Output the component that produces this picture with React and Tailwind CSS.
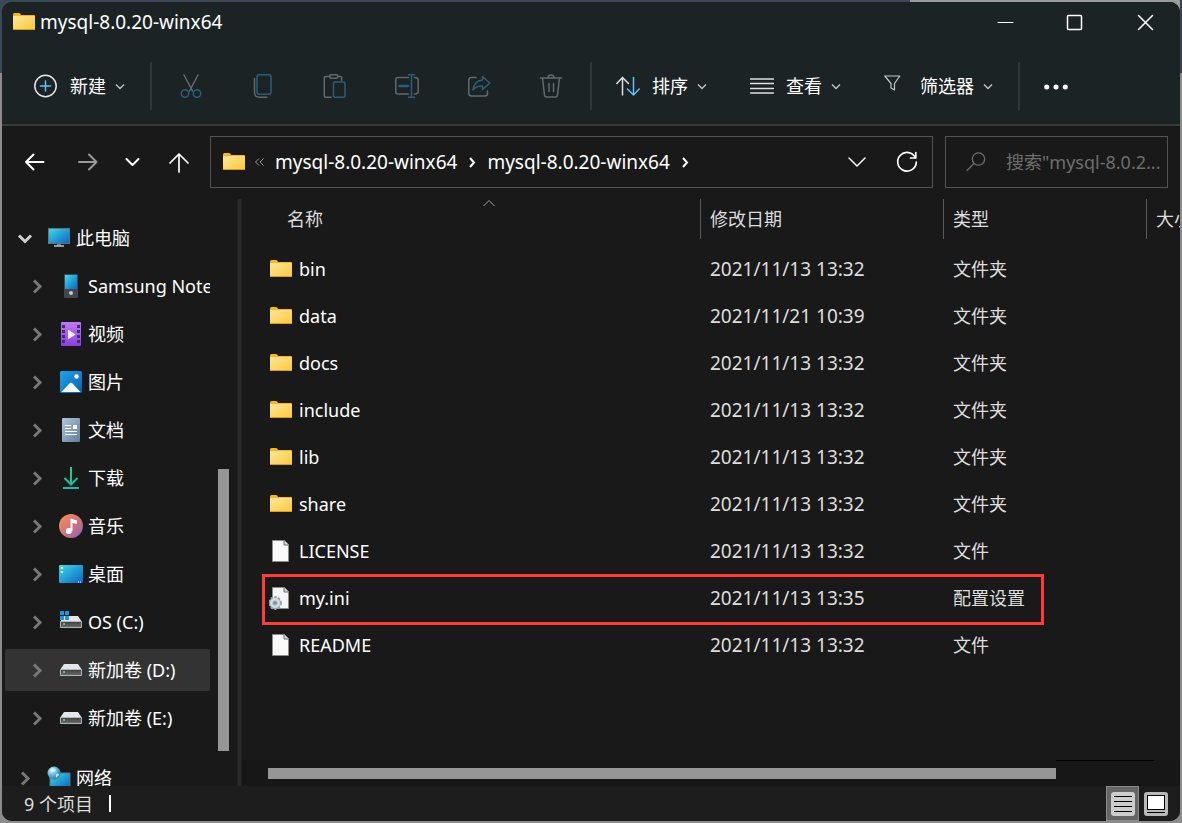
import React from 'react';

const sidebarItems = [
  { name: '此电脑', icon: 'pc', root: true, open: true },
  { name: 'Samsung Note10+', icon: 'phone' },
  { name: '视频', icon: 'video' },
  { name: '图片', icon: 'picture' },
  { name: '文档', icon: 'document' },
  { name: '下载', icon: 'download' },
  { name: '音乐', icon: 'music' },
  { name: '桌面', icon: 'desktop' },
  { name: 'OS (C:)', icon: 'osDrive' },
  { name: '新加卷 (D:)', icon: 'drive', selected: true },
  { name: '新加卷 (E:)', icon: 'drive' },
];

const files = [
  { name: 'bin', date: '2021/11/13 13:32', type: '文件夹', icon: 'folder' },
  { name: 'data', date: '2021/11/21 10:39', type: '文件夹', icon: 'folder' },
  { name: 'docs', date: '2021/11/13 13:32', type: '文件夹', icon: 'folder' },
  { name: 'include', date: '2021/11/13 13:32', type: '文件夹', icon: 'folder' },
  { name: 'lib', date: '2021/11/13 13:32', type: '文件夹', icon: 'folder' },
  { name: 'share', date: '2021/11/13 13:32', type: '文件夹', icon: 'folder' },
  { name: 'LICENSE', date: '2021/11/13 13:32', type: '文件', icon: 'file' },
  { name: 'my.ini', date: '2021/11/13 13:35', type: '配置设置', icon: 'config', marked: true },
  { name: 'README', date: '2021/11/13 13:32', type: '文件', icon: 'file' },
];

function Gradients() {
  return (
    <svg width="0" height="0" className="absolute" aria-hidden="true">
      <defs>
        <linearGradient id="gFolder" x1="0" y1="0" x2="1" y2="1">
          <stop offset="0" stopColor="#ffe69c" />
          <stop offset="1" stopColor="#fcc838" />
        </linearGradient>
        <linearGradient id="gScreen" x1="0" y1="0" x2="1" y2="1">
          <stop offset="0" stopColor="#3bdcea" />
          <stop offset="1" stopColor="#0b63c4" />
        </linearGradient>
        <linearGradient id="gVideo" x1="0" y1="0" x2="0" y2="1">
          <stop offset="0" stopColor="#bf7af5" />
          <stop offset="1" stopColor="#8a3fe0" />
        </linearGradient>
        <linearGradient id="gPicture" x1="0" y1="0" x2="1" y2="1">
          <stop offset="0" stopColor="#22a4ec" />
          <stop offset="1" stopColor="#0a5fb0" />
        </linearGradient>
        <linearGradient id="gDoc" x1="0" y1="0" x2="1" y2="1">
          <stop offset="0" stopColor="#b4c6d8" />
          <stop offset="1" stopColor="#5d7d9e" />
        </linearGradient>
        <linearGradient id="gDownload" gradientUnits="userSpaceOnUse" x1="4" y1="1" x2="20" y2="23">
          <stop offset="0" stopColor="#35d18c" />
          <stop offset="1" stopColor="#12b3a8" />
        </linearGradient>
        <linearGradient id="gMusic" x1="0" y1="0" x2="1" y2="1">
          <stop offset="0.1" stopColor="#f28e5c" />
          <stop offset="0.55" stopColor="#d0707c" />
          <stop offset="1" stopColor="#8560c4" />
        </linearGradient>
        <linearGradient id="gDrive" x1="0" y1="0" x2="0" y2="1">
          <stop offset="0" stopColor="#3f3f3f" />
          <stop offset="1" stopColor="#6a6a6a" />
        </linearGradient>
        <radialGradient id="gGlobe" cx="0.35" cy="0.3" r="0.8">
          <stop offset="0" stopColor="#d8f3fc" />
          <stop offset="0.5" stopColor="#5bb4d8" />
          <stop offset="1" stopColor="#1e6f9e" />
        </radialGradient>
      </defs>
    </svg>
  );
}

function DriveShape() {
  return (
    <>
      <path d="M5 6h14l4 6H1z" fill="#e4e4ea" />
      <path d="M1.500 11.500h21V17.500h-21z" fill="url(#gDrive)" stroke="#b5b5b5" strokeWidth="1" />
      <rect x="4" y="13" width="2" height="2" fill="#3ee03e" />
    </>
  );
}

const shapes = {
  folder: (
    <>
      <path d="M1 4.500Q1 3 2.500 3H7q1.500 0 2 2h13q1 0 1 1v4H1z" fill="#fab616" />
      <rect x="1" y="6" width="22" height="14" rx="1" fill="url(#gFolder)" />
      <path d="M1 19.500h22" stroke="#dd9c1c" />
    </>
  ),
  file: (
    <>
      <path d="M3.500 1.500h12l4 4v17h-16z" fill="#fafafa" stroke="#8d8d85" />
      <path d="M15 1.500v4.500h4.500" fill="#d8d8d8" stroke="#6d6d6d" />
    </>
  ),
  config: (
    <>
      <path d="M3.500 1.500h12l4 4v17h-16z" fill="#f4f5f6" stroke="#8d8d85" />
      <path d="M15 1.500v4.500h4.500" fill="#d8d8d8" stroke="#6d6d6d" />
      <circle cx="6" cy="17" r="5.800" fill="#b4c2cd" stroke="#93a4b1" strokeWidth="2.200" strokeDasharray="2.300 1.400" />
      <circle cx="6" cy="17" r="3.800" fill="none" stroke="#d3dde5" strokeWidth="2.200" />
      <circle cx="6" cy="17" r="1.800" fill="#7d8a94" />
    </>
  ),
  pc: (
    <>
      <rect x="1.500" y="2.500" width="21" height="15" fill="url(#gScreen)" stroke="#64747e" />
      <path d="M10 18h4v2h-4z" fill="#6e7a82" />
      <path d="M7 20h10" stroke="#bcc3c8" strokeWidth="1.500" />
    </>
  ),
  phone: (
    <>
      <rect x="5" y="0" width="14" height="24" rx="1" fill="#42464c" />
      <rect x="6" y="1" width="12" height="14" fill="url(#gScreen)" />
      <circle cx="12" cy="19" r="2" fill="#c4cbd4" />
    </>
  ),
  video: (
    <>
      <rect x="2" y="0" width="20" height="24" rx="1" fill="url(#gVideo)" />
      <path d="M3 3h3v3H3zM3 8h3v3H3zM3 13h3v3H3zM3 18h3v3H3zM18 3h3v3h-3zM18 8h3v3h-3zM18 13h3v3h-3zM18 18h3v3h-3z" fill="#452b6b" />
      <path d="M9 7.500v10l7.500-5z" fill="#f4efff" />
    </>
  ),
  picture: (
    <>
      <rect x="1" y="1" width="22" height="22" rx="1.500" fill="url(#gPicture)" />
      <path d="M2.500 22 10.500 13.500q1.500-1.500 3 0L21.500 22z" fill="#f3f9ff" />
      <circle cx="17.500" cy="6.500" r="2.200" fill="#fff" />
    </>
  ),
  document: (
    <>
      <rect x="3" y="0" width="18" height="24" rx="1" fill="url(#gDoc)" />
      <path d="M6 7.500h6M6 10.500h6M6 13.500h12M6 16.500h12" stroke="#fff" />
      <rect x="14" y="7" width="4" height="4" fill="#fff" />
    </>
  ),
  download: (
    <>
      <path d="M12 1v17M5.500 12l6.500 6.500L18.500 12M4 22h16" fill="none" stroke="url(#gDownload)" strokeWidth="2" />
    </>
  ),
  music: (
    <>
      <circle cx="12" cy="12" r="12" fill="url(#gMusic)" />
      <circle cx="9.800" cy="17" r="3" fill="#fff" />
      <path d="M11.500 17V4.500L18 6.500V10l-4.500-1v8z" fill="#fff" />
    </>
  ),
  desktop: (
    <>
      <rect x="0" y="3" width="24" height="18" rx="1" fill="url(#gScreen)" />
      <path d="M2 5h2v2H2zM2 9h2v2H2z" fill="#fff" />
      <path d="M19 20h1M21 20h1" stroke="#fff" />
    </>
  ),
  drive: <DriveShape />,
  osDrive: (
    <>
      <DriveShape />
      <path d="M1 1h4v4H1zM6 1h4v4H6zM1 6h4v4H1zM6 6h4v4H6z" fill="#1b95e6" />
    </>
  ),
  network: (
    <>
      <path d="M3 7h20v15H3z" fill="url(#gScreen)" stroke="#5a7784" />
      <circle cx="7" cy="7" r="6.500" fill="url(#gGlobe)" />
      <path d="M3 4q3-3 5-1t-2 3zM9 8q3-1 3 1l-3 3z" fill="#e4f6fb" opacity="0.8" />
    </>
  ),
};

function ShapeIcon({ name }) {
  return (
    <svg viewBox="0 0 24 24" className="w-6 h-6 shrink-0" aria-hidden="true">
      {shapes[name]}
    </svg>
  );
}

function LineIcon({ children, className = 'w-6 h-6' }) {
  return (
    <svg viewBox="0 0 24 24" fill="none" stroke="currentColor" strokeWidth="1.500" strokeLinecap="round" strokeLinejoin="round" className={`${className} shrink-0`} aria-hidden="true">
      {children}
    </svg>
  );
}

function SmallChevron() {
  return (
    <svg viewBox="0 0 12 12" fill="none" stroke="#c5c7c8" strokeWidth="1.300" className="w-3 h-3 shrink-0" aria-hidden="true">
      <path d="M2 4.500 6 8.500 10 4.500" />
    </svg>
  );
}

function ToolbarMenu({ label, children }) {
  return (
    <button className="flex items-center gap-3 whitespace-nowrap text-white">
      <LineIcon>{children}</LineIcon>
      <span className="flex items-center gap-2">
        {label}
        <SmallChevron />
      </span>
    </button>
  );
}

function ToolButton({ label, children }) {
  return (
    <button aria-label={label} className="w-12 h-12 flex items-center justify-center text-[#626a6e]">
      <LineIcon>{children}</LineIcon>
    </button>
  );
}

function Separator() {
  return <div className="w-[2px] h-12 shrink-0 bg-[#2f3538]" />;
}

function Toolbar() {
  return (
    <div className="h-[84px] shrink-0 bg-[#1c2325] border-b-2 border-[#3a3a3a] pl-8 pt-[5px] flex items-center">
      <ToolbarMenu label="新建">
        <circle cx="11.500" cy="12" r="10.700" stroke="#e4e6e7" />
        <path d="M11.500 7v10M6.500 12h10" stroke="#5cc4fa" />
      </ToolbarMenu>
      <div className="w-6" />
      <Separator />
      <div className="flex gap-6 px-[15px]">
        <ToolButton label="剪切">
          <path d="M5 1 13.500 17M19 1 10.500 17" />
          <circle cx="6" cy="19.500" r="3.700" stroke="#2a5f7c" />
          <circle cx="18" cy="19.500" r="3.700" stroke="#2a5f7c" />
        </ToolButton>
        <ToolButton label="复制">
          <rect x="6" y="0.800" width="14" height="19.500" rx="2" stroke="#2a5f7c" />
          <path d="M3.500 4.500v14q0 4.700 4.500 4.700h8" />
        </ToolButton>
        <ToolButton label="粘贴">
          <path d="M7 2.500H2.500Q1.300 2.500 1.300 3.700v18.300q0 1.200 1.200 1.200H8M15 2.500h2.500q1.200 0 1.200 1.200v2.500" />
          <rect x="6.500" y="0.800" width="8.500" height="3.500" rx="1.700" />
          <rect x="10.500" y="8" width="11.500" height="15.200" rx="1.500" stroke="#2a5f7c" />
        </ToolButton>
        <ToolButton label="重命名">
          <path d="M13.500 3.500H3Q.8 3.500.8 5.700v12q0 2.300 2.200 2.300h10.500M19.500 3.500Q23.200 3.500 23.200 6v11.500q0 2.500-3.700 2.500" />
          <path d="M4.500 12h8.500" stroke="#2a5f7c" strokeWidth="2.500" />
          <path d="M13.500.8h6M16.500.8v22.400M13.500 23.200h6" stroke="#2a5f7c" />
        </ToolButton>
        <ToolButton label="共享">
          <path d="M9 3.500H4.500Q1.800 3.500 1.800 6v13.500q0 2.500 2.700 2.500h13.500Q20.500 22 20.500 19.500v-2.500" />
          <path d="M15.500 2.500 22.800 9l-7.300 6.500V12q-6-.5-9.500 4Q7 7 15.500 6z" stroke="#2a5f7c" />
        </ToolButton>
        <ToolButton label="删除">
          <path d="M1.500 4h21M3.500 4l2 17.200q.2 1.800 1.500 1.800h10q1.300 0 1.500-1.800l2-17.200M9 4q0-3 3-3t3 3M10 9.500v8M14.500 9.500v8" />
        </ToolButton>
      </div>
      <Separator />
      <div className="flex items-center gap-[42px] px-6">
        <ToolbarMenu label="排序">
          <path d="M6.500 21V3.500M.8 9.500 6.500 3.500l6 6" stroke="#e0e2e3" />
          <path d="M17.500 3.500V21M11.500 15l6 6 5.700-6" stroke="#5cc4fa" />
        </ToolbarMenu>
        <ToolbarMenu label="查看">
          <path d="M.5 5h23M.5 9.500h23M.5 14.500h23M.5 19h23" stroke="#e0e2e3" />
        </ToolbarMenu>
        <ToolbarMenu label="筛选器">
          <path d="M.8 2h15L10.500 9.500V16L7 14V9.500z" stroke="#c5c7c8" strokeWidth="1.200" />
        </ToolbarMenu>
      </div>
      <Separator />
      <button aria-label="查看更多" className="ml-6 text-white">
        <svg viewBox="0 0 24 24" className="w-6 h-6" fill="currentColor" aria-hidden="true">
          <circle cx="2.700" cy="13" r="2.500" />
          <circle cx="12" cy="13" r="2.500" />
          <circle cx="21.300" cy="13" r="2.500" />
        </svg>
      </button>
    </div>
  );
}

function TitleBar() {
  return (
    <header className="h-10 shrink-0 bg-[#1c2325] pl-[10px] flex items-center">
      <ShapeIcon name="folder" />
      <h1 className="ml-1 flex-1 truncate text-[19px] text-white">mysql-8.0.20-winx64</h1>
      <div className="flex h-full text-white">
        <button aria-label="最小化" className="w-[70px] flex items-center justify-center">
          <LineIcon>
            <path d="M5 12.500h15" strokeWidth="1" />
          </LineIcon>
        </button>
        <button aria-label="最大化" className="w-[70px] flex items-center justify-center">
          <LineIcon>
            <rect x="4.500" y="5.500" width="14" height="14" rx="1" />
          </LineIcon>
        </button>
        <button aria-label="关闭" className="w-[70px] flex items-center justify-center">
          <LineIcon>
            <path d="M5.500 5.500l14 14M19.500 5.500l-14 14" />
          </LineIcon>
        </button>
      </div>
    </header>
  );
}

function Crumb({ children }) {
  return (
    <>
      <button className="whitespace-nowrap text-[19px]">{children}</button>
      <svg viewBox="0 0 12 12" fill="none" stroke="currentColor" strokeWidth="2" className="w-3 h-3 mx-[9px] shrink-0" aria-hidden="true">
        <path d="M4 2l4 4.500L4 11" />
      </svg>
    </>
  );
}

function NavBar() {
  return (
    <div className="shrink-0 pt-[10px] pb-[11px] pr-3 flex items-center text-white">
      <button aria-label="后退" className="w-[66px] flex justify-center">
        <LineIcon>
          <path d="M20.500 12H3M10.500 4.500 3 12l7.500 7.500" strokeWidth="2" />
        </LineIcon>
      </button>
      <button aria-label="前进" className="w-10 flex justify-center text-[#9a9a9a]">
        <LineIcon>
          <path d="M3 12h17.500M13 4.500l7.500 7.500-7.500 7.500" strokeWidth="2" />
        </LineIcon>
      </button>
      <button aria-label="最近浏览的位置" className="w-12 flex justify-center">
        <LineIcon>
          <path d="M6.500 9l6 6 6-6" strokeWidth="2" />
        </LineIcon>
      </button>
      <button aria-label="向上" className="w-[46px] mr-2 flex justify-center">
        <LineIcon>
          <path d="M12 22V4M3 13l9-9 9 9" strokeWidth="1.700" />
        </LineIcon>
      </button>
      <div className="flex-1 min-w-0 h-[52px] border border-[#535353] pl-[11px] pr-[13px] flex items-center">
        <ShapeIcon name="folder" />
        <svg viewBox="0 0 12 12" fill="none" stroke="#9a9a9a" className="w-3 h-3 ml-2 mr-[9px] shrink-0" aria-hidden="true">
          <path d="M5 2.500 1.500 6 5 9.500M9.500 2.500 6 6l3.500 3.500" />
        </svg>
        <Crumb>mysql-8.0.20-winx64</Crumb>
        <Crumb>mysql-8.0.20-winx64</Crumb>
        <button aria-label="以前的位置" className="ml-auto mr-[26px]">
          <LineIcon>
            <path d="M4 8l8 8 8-8" />
          </LineIcon>
        </button>
        <button aria-label="刷新">
          <LineIcon>
            <path d="M20.500 8A9.300 9.300 0 1 0 21.300 12M20.800 2.500V8H15.500" strokeWidth="1.700" />
          </LineIcon>
        </button>
      </div>
      <label className="w-[223px] h-[52px] ml-3 border border-[#535353] pl-[18px] flex items-center text-[#6e6e6e]">
        <LineIcon>
          <circle cx="14.500" cy="9" r="6.200" strokeWidth="1.300" />
          <path d="M10 13.500 3 20.500" strokeWidth="1.300" />
        </LineIcon>
        <input type="text" aria-label="搜索" placeholder={'搜索"mysql-8.0.2...'} className="ml-[18px] w-full min-w-0 bg-transparent outline-none placeholder:text-[#6e6e6e]" />
      </label>
    </div>
  );
}

function SidebarItem({ item }) {
  return (
    <li>
      <a
        href="#"
        className={`h-[42px] flex items-center overflow-hidden whitespace-nowrap rounded-xs text-white ${item.root ? 'pl-3' : 'pl-6'} ${item.selected ? 'bg-[#333333]' : ''}`}
      >
        <svg viewBox="0 0 16 16" fill="none" strokeWidth="3" className={`w-4 h-4 shrink-0 ${item.open ? 'stroke-[#d0d0d0]' : 'stroke-[#787878]'}`} aria-hidden="true">
          {item.open ? <path d="M2 5.500l6 6 6-6" /> : <path d="M5 2.500l6 6-6 6" />}
        </svg>
        <span className="ml-[14px] mr-[5px] flex">
          <ShapeIcon name={item.icon} />
        </span>
        {item.name}
      </a>
    </li>
  );
}

function Sidebar() {
  return (
    <aside className="w-[235px] shrink-0 overflow-hidden flex">
      <ul className="w-[208px] pl-[3px] pt-[18px] flex flex-col gap-[6px]">
        {sidebarItems.map((item) => (
          <SidebarItem key={item.name} item={item} />
        ))}
        <li className="h-[6px] shrink-0" aria-hidden="true" />
        <SidebarItem item={{ name: '网络', icon: 'network', root: true }} />
      </ul>
      <div className="flex-1 flex flex-col items-start pl-2">
        <div className="basis-[270px] shrink-0" />
        <div className="w-[11px] h-[282px] bg-[#969696]" />
      </div>
    </aside>
  );
}

function HeaderCell({ children }) {
  return (
    <th className="p-0 align-top font-normal text-left overflow-hidden">
      <div className="h-10 border-l border-[#5a5a5a] pl-[9px] flex items-center whitespace-nowrap">{children}</div>
    </th>
  );
}

function FileTable() {
  return (
    <table className="w-full table-fixed border-collapse text-[#dedede]">
      <colgroup>
        <col />
        <col className="w-[243px]" />
        <col className="w-[203px]" />
        <col className="w-[34px]" />
      </colgroup>
      <thead>
        <tr className="h-[46px]">
          <th className="p-0 pl-9 align-top font-normal text-left">
            <div className="relative h-10 pl-[9px] flex items-center">
              名称
              <svg viewBox="0 0 12 8" fill="none" stroke="#a0a0a0" className="absolute top-0 inset-x-0 mx-auto w-3 h-2" aria-hidden="true">
                <path d="M.5 7 6 1.500 11.500 7" />
              </svg>
            </div>
          </th>
          <HeaderCell>修改日期</HeaderCell>
          <HeaderCell>类型</HeaderCell>
          <HeaderCell>大小</HeaderCell>
        </tr>
      </thead>
      <tbody>
        {files.map((file) => (
          <tr key={file.name} className="relative h-[47px]">
            <td className="p-0 pl-[27px]">
              <div className="flex items-center gap-[6px] text-white">
                <ShapeIcon name={file.icon} />
                {file.name}
              </div>
              {file.marked && <div className="absolute left-5 right-[136px] top-0 h-[51px] border-3 border-[#ff3a38]" />}
            </td>
            <td className="p-0 pl-[10px] text-[19px]">{file.date}</td>
            <td className="p-0 pl-[10px]">{file.type}</td>
            <td className="p-0" />
          </tr>
        ))}
      </tbody>
    </table>
  );
}

function StatusBar() {
  return (
    <footer className="h-[35px] shrink-0 bg-[#1d1d1d] pl-[22px] pr-3 flex items-center text-[#dedede]">
      <span>9 个项目</span>
      <span className="ml-4 w-[2px] h-[17px] bg-white" />
      <div className="ml-auto h-full flex items-center gap-[5px]">
        <button aria-label="详细信息" className="w-[33px] h-full border border-[#8a8a8a] bg-[#666666] flex items-center justify-center">
          <svg viewBox="0 0 24 24" className="w-6 h-6" aria-hidden="true">
            <rect width="24" height="24" rx="3" fill="#cccccc" />
            <path d="M3 4.500h18M3 9.500h18M3 14.500h18M3 19.500h18" stroke="#000" />
          </svg>
        </button>
        <button aria-label="大图标" className="flex items-center">
          <svg viewBox="0 0 24 24" className="w-6 h-6" aria-hidden="true">
            <rect width="24" height="24" rx="3" fill="#b8b8b8" />
            <rect x="3.500" y="3.500" width="17" height="14" fill="#fff" stroke="#000" />
            <path d="M3 20.500h18" stroke="#000" />
          </svg>
        </button>
      </div>
    </footer>
  );
}

export default function App() {
  return (
    <div className="h-screen p-[2px] flex bg-[#8c8c8c] bg-[linear-gradient(90deg,#3c4858_77%,#9b9b9b_77%,#9b9b9b_99.8%,#3d4152_99.8%)] bg-[length:100%_73px] bg-no-repeat font-['Noto_Sans','Noto_Sans_CJK_SC',sans-serif] text-[18px] leading-6">
      <Gradients />
      <div className="flex-1 min-w-0 rounded-[10px] overflow-hidden bg-[#191919] flex flex-col">
        <TitleBar />
        <Toolbar />
        <NavBar />
        <div className="flex-1 min-h-0 flex">
          <Sidebar />
          <div className="w-[5px] shrink-0 bg-[#2a2a2a] border-x border-[#1f1f1f]" />
          <main className="flex-1 min-w-0 flex flex-col">
            <div className="flex-1 min-h-0 overflow-hidden">
              <FileTable />
            </div>
            <div className="h-[26px] shrink-0 bg-[#171717] pl-[26px] pr-[26px]">
              <div className="ml-auto h-px w-[98px] bg-black" />
              <div className="mt-[7px] mr-[98px] h-[11px] bg-[#969696]" />
            </div>
          </main>
        </div>
        <StatusBar />
      </div>
    </div>
  );
}
